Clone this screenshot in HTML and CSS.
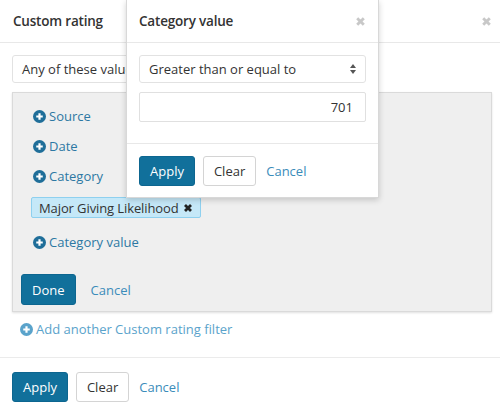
FILE: index.html
```html
<!DOCTYPE html>
<html>
<head>
<meta charset="utf-8">
<link rel="stylesheet" href="styles.css">
</head>
<body>
<div class="modal">
  <div class="header">
    <span class="title">Custom rating</span>
    <svg class="close" viewBox="0 0 10 10"><path d="M2 2L8 8M8 2L2 8"/></svg>
  </div>
  <div class="content">
    <div class="select wide"><span>Any of these values</span></div>
    <div class="panel">
      <div class="row link"><svg class="plus" viewBox="0 0 12 12"><circle cx="6" cy="6" r="6"/><path d="M6 3v6M3 6h6"/></svg>Source</div>
      <div class="row link"><svg class="plus" viewBox="0 0 12 12"><circle cx="6" cy="6" r="6"/><path d="M6 3v6M3 6h6"/></svg>Date</div>
      <div class="row link"><svg class="plus" viewBox="0 0 12 12"><circle cx="6" cy="6" r="6"/><path d="M6 3v6M3 6h6"/></svg>Category</div>
      <div class="tag">Major Giving Likelihood <svg class="x" viewBox="0 0 10 10"><path d="M2 2L8 8M8 2L2 8"/></svg></div>
      <div class="row link cv"><svg class="plus" viewBox="0 0 12 12"><circle cx="6" cy="6" r="6"/><path d="M6 3v6M3 6h6"/></svg>Category value</div>
      <div class="actions panel-actions">
        <button class="btn primary">Done</button>
        <span class="cancel">Cancel</span>
      </div>
    </div>
    <div class="add link light"><svg class="plus" viewBox="0 0 12 12"><circle cx="6" cy="6" r="6"/><path d="M6 3v6M3 6h6"/></svg>Add another Custom rating filter</div>
  </div>
  <div class="footer actions">
    <button class="btn primary">Apply</button>
    <button class="btn">Clear</button>
    <span class="cancel">Cancel</span>
  </div>

  <div class="popover">
    <div class="header pop-header">
      <span class="title">Category value</span>
      <svg class="close" viewBox="0 0 10 10"><path d="M2 2L8 8M8 2L2 8"/></svg>
    </div>
    <div class="pop-body">
      <div class="select"><span>Greater than or equal to</span>
        <svg class="arrows" viewBox="0 0 6 10"><path d="M3 0L6 4H0Z M3 10L6 6H0Z"/></svg>
      </div>
      <div class="input">701</div>
    </div>
    <div class="pop-footer actions">
      <button class="btn primary">Apply</button>
      <button class="btn">Clear</button>
      <span class="cancel">Cancel</span>
    </div>
  </div>
</div>
</body>
</html>
```

FILE: styles.css
```css
* { box-sizing: border-box; }
html, body { margin: 0; padding: 0; background: #fff; }
body { font-family: "Open Sans", "Noto Sans", sans-serif; font-size: 13px; color: #333; width: 500px; height: 411px; overflow: hidden; }
.modal { position: relative; width: 500px; height: 411px; }
.header { height: 43px; border-bottom: 1px solid #e8e8e8; display: flex; align-items: center; justify-content: space-between; padding: 0 8px 0 13px; }
.title { font-size: 13.5px; font-weight: 600; color: #333; letter-spacing: -0.2px; }
.close { width: 11px; height: 11px; }
.close path { stroke: #c8c8c8; stroke-width: 2.6; }
.content { padding: 12px 8px 0 12px; }
.select { height: 28px; border: 1px solid #e2e2e2; border-radius: 3px; display: flex; align-items: center; justify-content: space-between; padding: 0 9px; background: #fff; color: #333; }
.select.wide { width: 200px; }
.arrows { width: 6px; height: 10px; fill: #555; }
.panel { margin-top: 9px; background: #efefef; border: 1px solid #dadada; box-shadow: 0 1px 2px rgba(0,0,0,0.12); padding: 13px 0 6px 8px; height: 220px; }
.row { height: 20px; display: flex; align-items: center; margin: 0 0 10px 12px; }
.link { color: #2d78a3; }
.plus { width: 13px; height: 13px; margin-right: 3px; flex: none; }
.plus circle { fill: #1f6e99; }
.plus path { stroke: #fff; stroke-width: 2; }
.light { color: #5aa3cb; }
.light .plus circle { fill: #5aa3cb; }
.tag { display: inline-flex; align-items: center; height: 21px; margin: 1px 0 0 10px; padding: 0 7px 0 7px; background: #c5e8f8; border: 1px solid #8ed0ef; border-radius: 2px; color: #333; letter-spacing: -0.1px; }
.tag .x { width: 10px; height: 10px; margin-left: 4px; }
.tag .x path { stroke: #222; stroke-width: 2.8; }
.cv { margin-top: 14px; }
.actions { display: flex; align-items: center; }
.panel-actions { margin-top: 22px; }
.btn { font-family: inherit; font-size: 13px; height: 31px; padding: 0 10px; border: 1px solid #d4d4d4; border-radius: 3px; background: #fff; color: #333; margin-right: 8px; }
.btn.primary { background: #11709b; border-color: #0d6690; color: #fff; }
.cancel { color: #3b8cba; margin-left: 2px; }
.panel-actions .cancel { margin-left: 7px; }
.add { display: flex; align-items: center; height: 20px; margin: 7px 0 0 8px; }
.footer { margin-top: 18px; border-top: 1px solid #ebebeb; padding: 14px 12px 0 12px; }
.footer .btn { height: 30px; }
.popover { position: absolute; left: 126px; top: 0; width: 253px; height: 198px; background: #fff; border: 1px solid #d8d8d8; border-top: none; box-shadow: 0 2px 6px rgba(0,0,0,0.18); }
.pop-header { padding: 0 12px 0 12px; }
.pop-body { padding: 12px 12px 0 12px; border-bottom: 1px solid #e8e8e8; height: 101px; }
.input { margin-top: 9px; height: 30px; border: 1px solid #e0e0e0; border-radius: 2px; display: flex; align-items: center; justify-content: flex-end; padding: 0 12px; }
.pop-footer { padding: 12px 12px 0 12px; }
.pop-footer .btn { height: 30px; }
```
